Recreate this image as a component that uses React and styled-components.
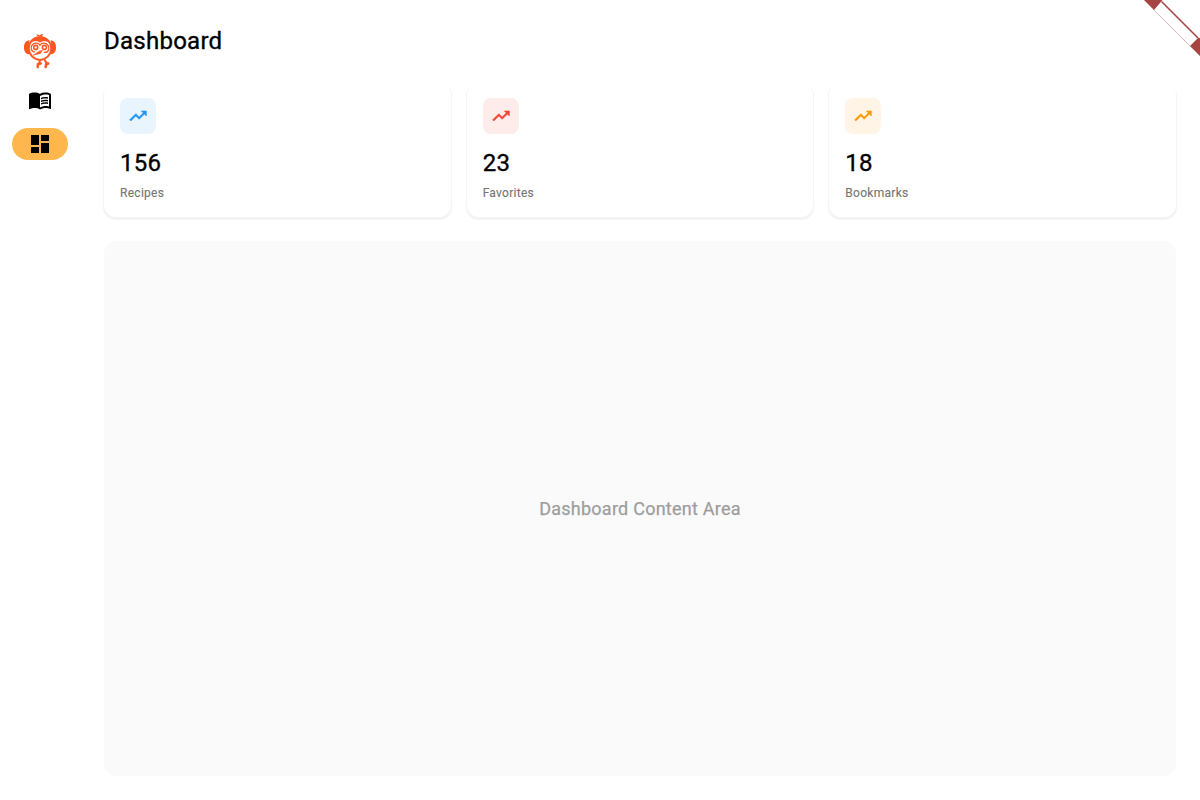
import React from "react";
import styled, { createGlobalStyle } from "styled-components";
import { MdDashboard, MdMenuBook, MdTrendingUp } from "react-icons/md";

const GlobalStyle = createGlobalStyle`
  * { box-sizing: border-box; }
  body { margin: 0; background: #fff; font-family: Roboto, sans-serif; color: #000; }
`;

const Page = styled.div`
  position: relative;
  display: flex;
  height: 100vh;
  overflow: hidden;
`;

const Rail = styled.nav`
  flex: 0 0 80px;
  display: flex;
  flex-direction: column;
  align-items: center;
  padding-top: 28px;
`;

const Logo = styled.svg`
  width: 48px;
  height: 48px;
  margin-bottom: 8px;
`;

const RailItem = styled.a`
  display: flex;
  align-items: center;
  justify-content: center;
  width: 56px;
  height: 32px;
  margin-bottom: 12px;
  border-radius: 16px;
  background: ${(p) => (p.$active ? "#ffb74d" : "transparent")};
  font-size: 24px;
`;

const Main = styled.main`
  flex: 1;
  display: flex;
  flex-direction: column;
  padding: 24px;
`;

const Title = styled.h1`
  margin: 0 0 24px;
  height: 34px;
  font-size: 24px;
  line-height: 34px;
  font-weight: 400;
  letter-spacing: 0.25px;
  -webkit-text-stroke: 0.35px currentColor;
`;

const Cards = styled.section`
  display: grid;
  grid-template-columns: repeat(3, 1fr);
  gap: 16px;
  margin-bottom: 24px;
`;

const Card = styled.article`
  height: 135px;
  padding: 16px;
  border-radius: 12px;
  background: #fff;
  box-shadow: 0 2px 1px 0.4px rgba(0, 0, 0, 0.046);
`;

const Badge = styled.div`
  display: flex;
  align-items: center;
  justify-content: center;
  width: 36px;
  height: 36px;
  border-radius: 8px;
  color: ${(p) => p.$color};
  background: ${(p) => p.$tint};
  font-size: 20px;

  path:last-child {
    stroke: currentColor;
    stroke-width: 0.7px;
  }
`;

const Value = styled.div`
  margin-top: 12px;
  font-size: 24px;
  line-height: 34px;
  font-weight: 400;
  letter-spacing: 0.3px;
  -webkit-text-stroke: 0.35px currentColor;
`;

const Label = styled.div`
  margin-top: 5px;
  font-size: 12px;
  line-height: 17px;
  letter-spacing: 0.28px;
  color: #757575;
  -webkit-text-stroke: 0.12px currentColor;
`;

const Content = styled.section`
  flex: 1;
  display: flex;
  align-items: center;
  justify-content: center;
  border-radius: 12px;
  background: #fafafa;
  color: #9e9e9e;
  font-size: 18px;
  font-weight: 400;
  letter-spacing: 0.25px;
  -webkit-text-stroke: 0.25px currentColor;
`;

const Ribbon = styled.svg`
  position: absolute;
  top: 0;
  right: 0;
  width: 60px;
  height: 60px;
`;

const stats = [
  { value: "156", label: "Recipes", color: "#2196f3", tint: "#e8f4fe" },
  { value: "23", label: "Favorites", color: "#f44336", tint: "#feeceb" },
  { value: "18", label: "Bookmarks", color: "#ff9800", tint: "#fff4e5" },
];

function MonkeyLogo() {
  return (
    <Logo viewBox="0 0 48 48" fill="none" stroke="#ff5722">
      <path d="M19.500 6.600c2-.2 3.200.2 4.200 1 .7-1.100 2-1.600 4-1.300-1 .4-1.400.9-1.400 1.600l-5 .2c-.1-.8-.7-1.300-1.800-1.500Z" fill="#ff5722" stroke="none" />
      <path d="M13.500 12.300c-4 .2-5.700 3.500-5.500 7.700.2 4 2 6.600 6 6.200-1.400-4-1.700-9-.5-13.900ZM34.500 12.300c4 .2 5.700 3.500 5.500 7.700-.2 4-2 6.600-6 6.200 1.400-4 1.700-9 .5-13.900Z" fill="#ff5722" stroke="none" />
      <ellipse cx="24" cy="20.300" rx="11.200" ry="11.500" strokeWidth="1.800" />
      <path d="M14 15c2-4 5.500-5.800 10-5.800S32 11 34 15c-2.500-2-7.500-2.500-10-.6-2.500-1.900-7.500-1.400-10 .6Z" fill="#ff5722" stroke="none" />
      <path d="M15.300 21.500c-1-6 5.700-8.300 8.700-4.300 3-4 9.700-1.700 8.700 4.300-.7 2.500-3 3.200-5 2.700" strokeWidth="1.200" />
      <circle cx="19.700" cy="19.400" r="2" strokeWidth="1.600" />
      <circle cx="28.400" cy="19.400" r="2" strokeWidth="1.600" />
      <path d="M15.300 21c.5 2 1.600 3 3.700 3" strokeWidth="1.200" />
      <path d="M26.600 22.300 24.400 25.400 17 27.300 23.200 23.200Z" fill="#ff5722" strokeWidth=".5" />
      <path d="M24.300 31.500 23.300 35M28.200 31.300l2.500 4" strokeWidth="2" />
      <path d="M24.700 35.500 22 36l-.3 3M32.300 35.500l-2.100.7-.5 2.700" strokeWidth="2.600" strokeLinecap="round" strokeLinejoin="round" />
    </Logo>
  );
}

function CornerRibbon() {
  return (
    <Ribbon viewBox="0 0 60 60">
      <path d="M4 0H22L60 38V56Z" fill="#fff" />
      <path d="M14 10 50 46" stroke="#dbb5b5" strokeWidth="1" />
      <path d="M21.500 1.500 58 38" stroke="#a74343" strokeWidth="1.600" />
      <path d="m21.500 17.500 6-6M29 25l6-6M36.500 32.500l6-6M44 40l6-6" stroke="#f6eeee" strokeWidth="0.700" />
      <path d="M4 0H22.500L14 10ZM58 38l2 0V56L50 46Z" fill="#a74343" />
    </Ribbon>
  );
}

export default function App() {
  return (
    <Page>
      <GlobalStyle />
      <Rail>
        <MonkeyLogo />
        <RailItem><MdMenuBook /></RailItem>
        <RailItem $active><MdDashboard /></RailItem>
      </Rail>
      <Main>
        <Title>Dashboard</Title>
        <Cards>
          {stats.map((s) => (
            <Card key={s.label}>
              <Badge $color={s.color} $tint={s.tint}><MdTrendingUp /></Badge>
              <Value>{s.value}</Value>
              <Label>{s.label}</Label>
            </Card>
          ))}
        </Cards>
        <Content>Dashboard Content Area</Content>
      </Main>
      <CornerRibbon />
    </Page>
  );
}
